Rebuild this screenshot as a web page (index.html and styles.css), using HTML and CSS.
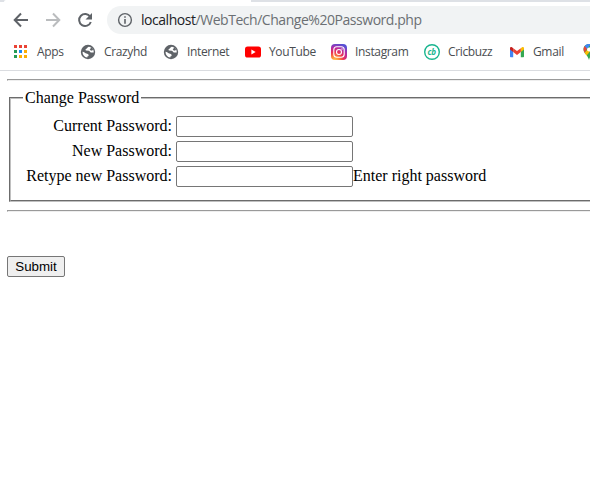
FILE: index.html
```html
<!DOCTYPE html>
<html lang="en">
<head>
<meta charset="utf-8">
<title>Change Password</title>
<link rel="stylesheet" href="styles.css">
</head>
<body>
<header class="browser">
  <div class="tabs"><div class="tab"></div></div>
  <div class="toolbar">
    <svg class="nav" viewBox="0 0 16 16"><path d="M15 8H2M8 1.5 1.7 8 8 14.5" fill="none" stroke="#5f6368" stroke-width="2"/></svg>
    <svg class="nav" viewBox="0 0 16 16"><path d="M1 8h13M8 1.5 14.3 8 8 14.5" fill="none" stroke="#babcbe" stroke-width="2"/></svg>
    <svg class="nav" viewBox="0 0 16 16"><path d="M13.2 4.8A6 6 0 1 0 13.8 10" fill="none" stroke="#5f6368" stroke-width="2"/><path d="M15 1v6.5H8.5z" fill="#5f6368"/></svg>
    <div class="address">
      <svg class="info" viewBox="0 0 16 16"><circle cx="8" cy="8" r="6.4" fill="none" stroke="#5f6368" stroke-width="1.4"/><path d="M7.2 7h1.6v4.8H7.2zM7.2 4.2h1.6v1.6H7.2z" fill="#5f6368"/></svg>
      <span class="url"><span class="host">localhost</span>/WebTech/Change%20Password.php</span>
    </div>
  </div>
  <nav class="bookmarks">
    <a class="apps"><svg viewBox="0 0 16 16"><path d="M1 1h3v3H1zM6 1h3v3H6zM11 1h3v3h-3z" fill="#ea4335"/><path d="M1 6h3v3H1zM1 11h3v3H1z" fill="#259b55"/><path d="M6 6h3v3H6z" fill="#1a87f5"/><path d="M11 6h3v3h-3zM11 11h3v3h-3zM6 11h3v3H6z" fill="#fbad05"/></svg><span>Apps</span></a>
    <a class="crazy"><svg viewBox="0 0 16 16"><circle cx="8" cy="8" r="7.2" fill="#5f6368"/><path d="M8.8 2.8C7.2 3.2 7.4 4.3 6.4 4.8 5.2 5.4 5.2 6.4 6.2 6.6l2.6.2c1 .2.9 1.5 2 1.6l2.9.2c.4-2.8-1.7-5.4-4.9-5.8zM2.6 7.7C2.3 10.6 4.5 13.2 7.3 13.5v-1c1.4-.4 1.6-1.4 1.1-2.1-.6-.9-1.8-.8-2.8-1.2C4.4 8.6 3.9 7.6 2.6 7.7z" fill="#fff"/><path d="m11.2 3.2 2 2.1-1.1 1.4-2.4-.8z" fill="#5f6368"/></svg><span>Crazyhd</span></a>
    <a class="internet"><svg viewBox="0 0 16 16"><circle cx="8" cy="8" r="7.2" fill="#5f6368"/><path d="M8.8 2.8C7.2 3.2 7.4 4.3 6.4 4.8 5.2 5.4 5.2 6.4 6.2 6.6l2.6.2c1 .2.9 1.5 2 1.6l2.9.2c.4-2.8-1.7-5.4-4.9-5.8zM2.6 7.7C2.3 10.6 4.5 13.2 7.3 13.5v-1c1.4-.4 1.6-1.4 1.1-2.1-.6-.9-1.8-.8-2.8-1.2C4.4 8.6 3.9 7.6 2.6 7.7z" fill="#fff"/><path d="m11.2 3.2 2 2.1-1.1 1.4-2.4-.8z" fill="#5f6368"/></svg><span>Internet</span></a>
    <a class="youtube"><svg viewBox="0 0 16 16"><rect y="2.4" width="16" height="11.2" rx="2.6" fill="#f00"/><path d="M6.4 5.6v4.8L10.6 8z" fill="#fff"/></svg><span>YouTube</span></a>
    <a class="instagram"><svg viewBox="0 0 16 16"><defs><radialGradient id="ig" cx=".25" cy="1.05" r="1.1"><stop offset="0" stop-color="#ffd25a"/><stop offset=".25" stop-color="#fd8b38"/><stop offset=".5" stop-color="#ec3056"/><stop offset=".76" stop-color="#b42ba5"/><stop offset="1" stop-color="#5551d5"/></radialGradient></defs><rect width="16" height="16" rx="4" fill="url(#ig)"/><g fill="none" stroke="#fff" stroke-width="1.1"><rect x="2.8" y="2.8" width="10.4" height="10.4" rx="3"/><circle cx="8" cy="8" r="2.5"/></g><circle cx="11" cy="5" r=".7" fill="#fff"/></svg><span>Instagram</span></a>
    <a class="cricbuzz"><svg viewBox="0 0 16 16"><circle cx="8" cy="8" r="7.3" fill="#fff" stroke="#19b58f" stroke-width="1.4"/><text x="7.8" y="10.8" text-anchor="middle" class="cb">cb</text></svg><span>Cricbuzz</span></a>
    <a class="gmail"><svg viewBox="0 0 16 16"><path d="M1 4v8.4q0 .8.8.8h2.4V6z" fill="#4285f4"/><path d="M15 4v8.4q0 .8-.8.8h-2.4V6z" fill="#34a853"/><path d="M11.8 4.2 13 3.2c.9-.7 2-.1 2 1v1.4L11.8 8z" fill="#fbbc04"/><path d="M4.2 4.2 8 7l3.8-2.8V8L8 10.9 4.2 8z" fill="#ea4335"/><path d="M4.2 4.2 3 3.2c-.9-.7-2-.1-2 1v1.4L4.2 8z" fill="#c5221f"/></svg><span>Gmail</span></a>
    <a class="maps"><svg viewBox="0 0 16 16"><path d="M8 0C4.8 0 2.5 2.3 2.5 5.4c0 4 4.2 5 5.5 10.6 1.3-5.6 5.5-6.6 5.5-10.6C13.5 2.3 11.2 0 8 0z" fill="#34a853"/><path d="M3.8 1.9 6.5 4 3.7 8.7C2.1 6.4 2.2 3.8 3.8 1.9z" fill="#ea4335"/><path d="M3.8 1.9C5.6-.4 8.4-.2 9.8.3L6 5z" fill="#4285f4"/><path d="m3.6 8.7 3-3.5L9 7.4l-3.4 4z" fill="#fbbc04"/><circle cx="8" cy="5.4" r="2" fill="#fff"/></svg></a>
  </nav>
</header>
<main class="page">
  <hr>
  <form>
    <fieldset>
      <legend>Change Password</legend>
      <div class="rows">
        <label for="current">Current Password:</label><div class="field"><input id="current" type="password"></div>
        <label for="new">New Password:</label><div class="field"><input id="new" type="password"></div>
        <label for="retype">Retype new Password:</label><div class="field"><input id="retype" type="password"><span>Enter right password</span></div>
      </div>
    </fieldset>
    <hr>
    <button class="submit" type="button">Submit</button>
  </form>
</main>
</body>
</html>
```
FILE: styles.css
```css
* { box-sizing: border-box; }
body { margin: 0; height: 478px; overflow: hidden; background: #fff; }
svg { display: block; flex: none; }

.browser { height: 71px; border-bottom: 1px solid #dadce0; font-family: "Open Sans", sans-serif; }
.tabs { height: 2px; background: #dee1e6; }
.tab { width: 247px; height: 2px; margin-left: 4px; background: #fff; border-radius: 2px 0 0 0; }
.toolbar { display: flex; align-items: center; height: 36px; padding-left: 13px; }
.nav { width: 16px; height: 16px; margin-right: 16px; }
.address { display: flex; align-items: center; flex: 1; height: 28px; margin: 0 -20px 0 -2px; padding-left: 10px; border-radius: 14px 0 0 14px; background: #f1f3f4; }
.info { width: 16px; height: 16px; margin-right: 8px; }
.url { font-size: 14px; line-height: 20px; letter-spacing: -0.46px; color: #6b6f73; white-space: nowrap; }
.host { color: #202124; }

.bookmarks { display: grid; grid-template-columns: 67px 83px 82px 86px 93px 85px 71.5px 16px; padding-left: 13px; height: 28px; align-items: center; }
.bookmarks a { display: flex; align-items: center; gap: 8px; font-size: 12px; line-height: 16px; letter-spacing: -0.35px; color: #4a4d51; white-space: nowrap; }
.bookmarks svg { width: 16px; height: 16px; }
.cb { font: italic bold 8px "Open Sans", sans-serif; letter-spacing: 0; fill: #19b58f; }

.page { padding: 8px 0 0 7px; margin-right: -20px; font: 16px/18px "Liberation Serif", serif; color: #000; }
hr { margin: 0; }
fieldset { height: 113px; margin: 8px 0 8px 2px; padding: 0 12px; border: 2px groove #c0c0c0; }
legend { padding: 0 2px; }
.rows { display: grid; grid-template-columns: 149px auto; grid-auto-rows: 22px; row-gap: 3px; column-gap: 4px; padding-top: 8px; align-items: center; }
label { text-align: right; white-space: nowrap; }
.field { display: flex; align-items: center; }
input { width: 177px; height: 21px; margin: 0; padding: 1px 2px; border: 1px solid #767676; border-radius: 2px; background: #fff; }
.submit { display: block; width: 58px; height: 21px; margin-top: 44px; padding: 0; border: 1px solid #767676; border-radius: 2px; background: #efefef; color: #000; font: 13.333px/17px "Liberation Sans", sans-serif; }
```
